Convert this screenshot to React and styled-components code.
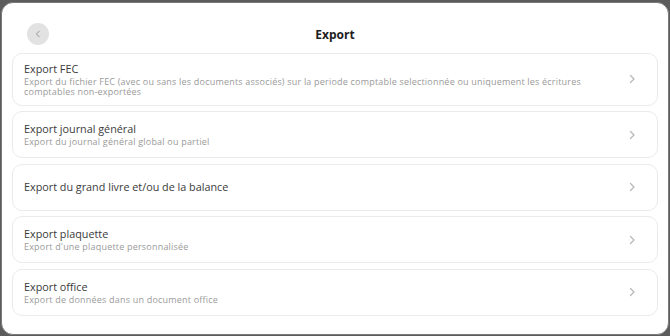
import React from "react"
import styled, { createGlobalStyle } from "styled-components"

const GlobalStyle = createGlobalStyle`
  html, body {
    margin: 0;
    padding: 0;
    background: #5c5c5c;
  }
  body {
    font-family: "Open Sans", "Noto Sans", sans-serif;
  }
`

const items = [
  {
    title: "Export FEC",
    desc: "Export du fichier FEC (avec ou sans les documents associés) sur la periode comptable selectionnée ou uniquement les écritures comptables non-exportées",
  },
  { title: "Export journal général", desc: "Export du journal général global ou partiel" },
  { title: "Export du grand livre et/ou de la balance" },
  { title: "Export plaquette", desc: "Export d'une plaquette personnalisée" },
  { title: "Export office", desc: "Export de données dans un document office" },
]

const Chevron = ({ size = 10, color = "#b8b8b8" }) => (
  <svg width={size} height={size} viewBox="0 0 10 10" fill="none">
    <path d="M3.5 1.5 L7 5 L3.5 8.5" stroke={color} strokeWidth="1.3" strokeLinecap="round" strokeLinejoin="round" />
  </svg>
)

const App = () => {
  return (
    <>
      <GlobalStyle />
      <Screen>
        <Panel>
          <Header>
            <BackButton aria-label="Retour">
              <svg width="8" height="8" viewBox="0 0 10 10" fill="none">
                <path d="M6.5 1.5 L3 5 L6.5 8.5" stroke="#a8a8a8" strokeWidth="1.3" strokeLinecap="round" strokeLinejoin="round" />
              </svg>
            </BackButton>
            <Title>Export</Title>
          </Header>
          <List>
            {items.map((item) => (
              <Card key={item.title} tall={item.title === "Export FEC"}>
                <CardText>
                  <CardTitle>{item.title}</CardTitle>
                  {item.desc && <CardDesc>{item.desc}</CardDesc>}
                </CardText>
                <Chevron />
              </Card>
            ))}
          </List>
        </Panel>
      </Screen>
    </>
  )
}

const Screen = styled.div`
  width: 670px;
  height: 336px;
  box-sizing: border-box;
  padding: 2px 1px 1px 1px;
  display: flex;
`

const Panel = styled.div`
  flex: 1;
  background: #fff;
  border: 1px solid #7a7a7a;
  border-radius: 12px;
  box-sizing: border-box;
  padding: 18px 10px 0 10px;
  display: flex;
  flex-direction: column;
`

const Header = styled.div`
  position: relative;
  height: 26px;
  display: flex;
  align-items: center;
  justify-content: center;
  margin-bottom: 6px;
`

const BackButton = styled.button`
  position: absolute;
  left: 15px;
  top: 2px;
  width: 22px;
  height: 22px;
  border-radius: 50%;
  border: none;
  background: #e2e2e2;
  padding: 0;
  display: flex;
  align-items: center;
  justify-content: center;
`

const Title = styled.h1`
  margin: 0;
  font-size: 12px;
  font-weight: 700;
  color: #1e1e1e;
`

const List = styled.div`
  display: flex;
  flex-direction: column;
  gap: 5.5px;
`

const Card = styled.div`
  display: flex;
  align-items: center;
  justify-content: space-between;
  min-height: ${(p) => (p.tall ? 52.5 : 47)}px;
  box-sizing: border-box;
  border: 1px solid #ebebeb;
  border-radius: 10px;
  padding: 6px 20px 6px 11px;
`

const CardText = styled.div`
  display: flex;
  flex-direction: column;
  gap: 1px;
  max-width: 570px;
`

const CardTitle = styled.div`
  font-size: 10.8px;
  line-height: 14px;
  color: #3a3a3a;
`

const CardDesc = styled.div`
  font-size: 9px;
  letter-spacing: 0.2px;
  line-height: 10px;
  color: #9a9a9a;
`

export default App
